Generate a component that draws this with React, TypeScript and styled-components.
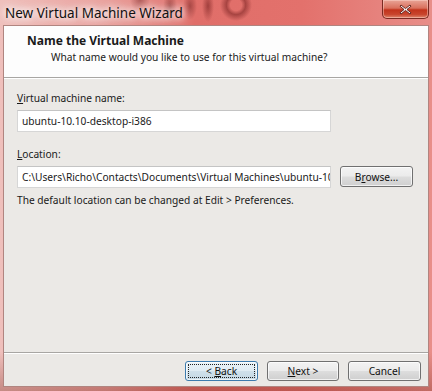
import React from "react";
import styled, { createGlobalStyle } from "styled-components";

const GlobalStyle = createGlobalStyle`
  html, body { margin: 0; padding: 0; background: #e7918d; }
  * { box-sizing: border-box; }
`;

const FONT = `"Noto Sans", "Open Sans", Arial, sans-serif`;

const Window = styled.div`
  width: 432px;
  height: 391px;
  display: flex;
  flex-direction: column;
  padding: 0 3px 4px 3px;
  font-family: ${FONT};
  font-size: 10.2px;
  color: #1a1a1a;
  background:
    linear-gradient(180deg, rgba(255,255,255,0) 90%, rgba(120,40,30,0.35) 100%),
    linear-gradient(90deg, #efc0bc 0%, #e9a09c 25%, #e06e69 45%, #e3716c 70%, #e88e89 100%);
  overflow: hidden;
`;

const TitleBar = styled.div`
  height: 25px;
  display: flex;
  align-items: flex-start;
  flex-shrink: 0;
  margin: 0 -3px;
  padding: 0 3px;
  background:
    radial-gradient(ellipse 10px 12px at 140px 0px, rgba(110,25,25,0.45), rgba(110,25,25,0) 100%),
    radial-gradient(ellipse 7px 14px at 170px 6px, rgba(110,25,25,0.5), rgba(110,25,25,0) 100%),
    radial-gradient(ellipse 7px 14px at 190px 6px, rgba(110,25,25,0.5), rgba(110,25,25,0) 100%),
    radial-gradient(ellipse 6px 16px at 208px 6px, rgba(110,25,25,0.55), rgba(110,25,25,0) 100%),
    radial-gradient(ellipse 16px 16px at 236px 5px, rgba(110,25,25,0) 35%, rgba(110,25,25,0.5) 60%, rgba(110,25,25,0) 100%);
`;

const Caption = styled.div`
  margin: 5px 0 0 2px;
  font-size: 13.5px;
  line-height: 16px;
  color: #111;
  text-shadow: 0 0 6px #fff, 0 0 10px #fff, 0 0 14px #fff;
`;

const CloseButton = styled.div`
  margin-left: auto;
  width: 47px;
  height: 19px;
  border: 1px solid #7a2a22;
  border-top: none;
  border-radius: 0 0 5px 5px;
  background: linear-gradient(180deg, #e9a597 0%, #d9705d 45%, #c2331c 55%, #c8452d 80%, #e0876e 100%);
  display: flex;
  align-items: center;
  justify-content: center;
  box-shadow: inset 0 0 0 1px rgba(255,220,210,0.45);
`;

const Client = styled.div`
  flex: 1;
  display: flex;
  flex-direction: column;
  background: #ebe9e6;
  border: 1px solid #b08580;
`;

const Header = styled.div`
  height: 52px;
  flex-shrink: 0;
  background: #fdfdfd;
  border-bottom: 1px solid #a8a6a3;
  box-shadow: 0 1px 0 #fff;
  padding: 7px 0 0 23px;
`;

const HeaderTitle = styled.div`
  font-weight: bold;
  font-size: 12px;
  line-height: 16px;
`;

const HeaderSub = styled.div`
  margin-left: 24px;
  line-height: 16px;
`;

const Body = styled.div`
  flex: 1;
  display: flex;
  flex-direction: column;
  padding: 12px 0 0 13px;
`;

const Label = styled.div<{ $gap?: number }>`
  line-height: 16px;
  margin-top: ${(p) => p.$gap ?? 0}px;
`;

const Key = styled.span`
  text-decoration: underline;
  text-underline-offset: 1px;
`;

const Row = styled.div`
  display: flex;
  align-items: flex-start;
  margin-top: 4px;
`;

const TextBox = styled.div`
  width: 314px;
  height: 22px;
  background: #fff;
  border: 1px solid #d6d6d6;
  border-top-color: #c4c4c4;
  padding: 0 0 0 4px;
  line-height: 20px;
  white-space: nowrap;
  overflow: hidden;
`;

const Button = styled.div<{ $focused?: boolean; $w?: number }>`
  width: ${(p) => p.$w ?? 73}px;
  height: 20px;
  border: 1px solid ${(p) => (p.$focused ? "#3d7bad" : "#707070")};
  border-radius: 3px;
  background: ${(p) =>
    p.$focused
      ? "linear-gradient(180deg, #eaf3f8 0%, #e0ecf3 48%, #cfe0ea 52%, #c4d8e4 100%)"
      : "linear-gradient(180deg, #f3f3f3 0%, #ebebeb 48%, #dddddd 52%, #cfcfcf 100%)"};
  box-shadow: inset 0 0 0 1px rgba(255,255,255,0.7);
  display: flex;
  align-items: center;
  justify-content: center;
  line-height: 16px;
  color: #111;
  position: relative;
`;

const FocusRect = styled.div`
  position: absolute;
  inset: 2px;
  border: 1px dotted #222;
  border-radius: 1px;
`;

const BrowseButton = styled(Button)`
  margin-left: 9px;
  height: 21px;
`;

const Note = styled.div`
  margin-top: 4px;
  line-height: 16px;
`;

const Footer = styled.div`
  flex-shrink: 0;
  border-top: 1px solid #a8a6a3;
  box-shadow: inset 0 1px 0 #fff;
  display: flex;
  justify-content: flex-end;
  gap: 9px;
  padding: 8px 7px 5px 0;
`;

const CloseGlyph = () => (
  <svg width="13" height="11" viewBox="0 0 13 11">
    <path
      d="M2 1 L6.5 4.6 L11 1 L12 2.2 L8 5.5 L12 8.8 L11 10 L6.5 6.4 L2 10 L1 8.8 L5 5.5 L1 2.2 Z"
      fill="#fff"
      stroke="#5a1a12"
      strokeWidth="0.9"
      strokeLinejoin="round"
    />
  </svg>
);

export default function App() {
  return (
    <>
      <GlobalStyle />
      <Window>
        <TitleBar>
          <Caption>New Virtual Machine Wizard</Caption>
          <CloseButton>
            <CloseGlyph />
          </CloseButton>
        </TitleBar>
        <Client>
          <Header>
            <HeaderTitle>Name the Virtual Machine</HeaderTitle>
            <HeaderSub>What name would you like to use for this virtual machine?</HeaderSub>
          </Header>
          <Body>
            <Label>
              <Key>V</Key>irtual machine name:
            </Label>
            <Row>
              <TextBox>ubuntu-10.10-desktop-i386</TextBox>
            </Row>
            <Label $gap={14}>
              <Key>L</Key>ocation:
            </Label>
            <Row>
              <TextBox>C:\Users\Richo\Contacts\Documents\Virtual Machines\ubuntu-10</TextBox>
              <BrowseButton>
                <span>
                  B<Key>r</Key>owse...
                </span>
              </BrowseButton>
            </Row>
            <Note>The default location can be changed at Edit &gt; Preferences.</Note>
          </Body>
          <Footer>
            <Button $focused $w={73}>
              <FocusRect />
              <span>
                &lt; <Key>B</Key>ack
              </span>
            </Button>
            <Button $w={72}>
              <span>
                <Key>N</Key>ext &gt;
              </span>
            </Button>
            <Button $w={73}>
              <span>Cancel</span>
            </Button>
          </Footer>
        </Client>
      </Window>
    </>
  );
}
